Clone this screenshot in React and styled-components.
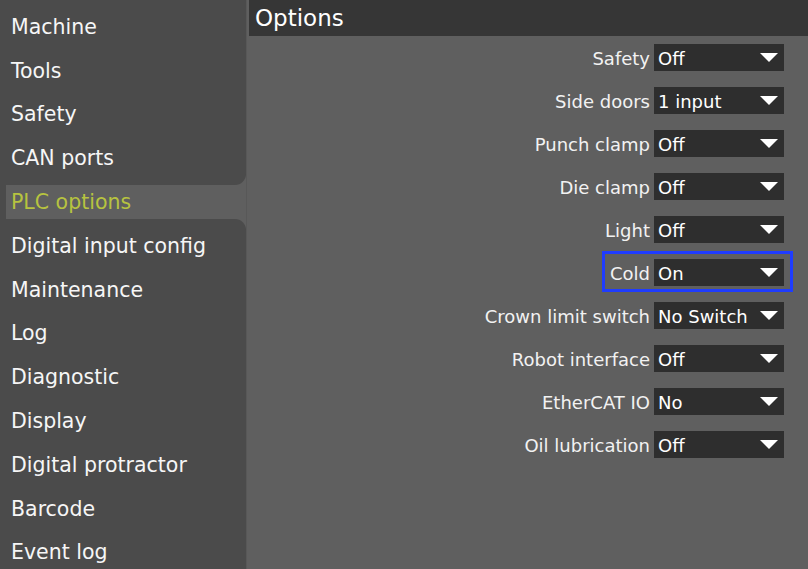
import styled, { createGlobalStyle } from 'styled-components';

const GlobalStyle = createGlobalStyle`
  html, body {
    margin: 0;
    padding: 0;
    background: #5f5f5f;
  }
  body {
    font-family: "DejaVu Sans", "Liberation Sans", sans-serif;
    color: #f4f4f4;
  }
`

const Screen = styled.div`
  display: flex;
  width: 808px;
  height: 569px;
  overflow: hidden;
  background: #5f5f5f;
`

const Sidebar = styled.nav`
  display: flex;
  flex-direction: column;
  width: 246px;
  flex: none;
  background: #5f5f5f;
`

const SidebarTop = styled.div`
  flex: none;
  height: 5px;
  background: #4b4b4b;
`

const NavItem = styled.div`
  display: flex;
  align-items: center;
  flex: none;
  box-sizing: border-box;
  height: ${({ $extend }) => ($extend ? '48.8px' : '43.8px')};
  padding-left: 11px;
  padding-top: ${({ $extend }) => ($extend === 'top' ? '5px' : '0')};
  padding-bottom: ${({ $extend }) => ($extend === 'bottom' ? '5px' : '0')};
  background: #4b4b4b;
  border-bottom-right-radius: ${({ $extend }) => ($extend === 'bottom' ? '11px' : '0')};
  border-top-right-radius: ${({ $extend }) => ($extend === 'top' ? '11px' : '0')};
  font-size: 20.5px;
  color: #f6f6f6;
  white-space: nowrap;
`

const NavItemActive = styled.div`
  display: flex;
  align-items: center;
  flex: none;
  box-sizing: border-box;
  height: 33.8px;
  padding-left: 5px;
  border-left: 6px solid #4b4b4b;
  background: #5f5f5f;
  font-size: 20.5px;
  color: #b7c340;
  white-space: nowrap;
`

const Main = styled.main`
  display: flex;
  flex-direction: column;
  flex: auto;
  padding-left: 2px;
  border-left: 1px solid #585858;
`

const Header = styled.header`
  display: flex;
  align-items: center;
  flex: none;
  height: 36px;
  padding-left: 6px;
  background: #363636;
  font-size: 23px;
  color: #ffffff;
`

const OptionList = styled.div`
  display: flex;
  flex-direction: column;
  align-items: flex-end;
  gap: 16px;
  padding: 8px 24px 0 0;
`

const Row = styled.div`
  display: flex;
  align-items: center;
  gap: 4px;
  border: ${({ $highlight }) => ($highlight ? '3px solid #1f3cff' : 'none')};
  padding: ${({ $highlight }) => ($highlight ? '5px 6px 3px 5px' : '0')};
  margin: ${({ $highlight }) => ($highlight ? '-8px -9px -6px 0' : '0')};
`

const Label = styled.span`
  font-size: 18px;
  color: #f2f2f2;
  padding-top: 2px;
  white-space: nowrap;
`

const Select = styled.div`
  display: flex;
  align-items: center;
  justify-content: space-between;
  box-sizing: border-box;
  width: 130px;
  height: 27px;
  padding: 2px 6px 0 4px;
  background: #2e2e2e;
  font-size: 18px;
  color: #ffffff;
  white-space: nowrap;
`

const Caret = styled.svg`
  width: 18px;
  height: 9px;
  flex: none;
  margin-top: -2px;
`

const navItems = [
  'Machine',
  'Tools',
  'Safety',
  'CAN ports',
  'PLC options',
  'Digital input config',
  'Maintenance',
  'Log',
  'Diagnostic',
  'Display',
  'Digital protractor',
  'Barcode',
  'Event log',
]

const activeIndex = 4

const options = [
  { label: 'Safety', value: 'Off' },
  { label: 'Side doors', value: '1 input' },
  { label: 'Punch clamp', value: 'Off' },
  { label: 'Die clamp', value: 'Off' },
  { label: 'Light', value: 'Off' },
  { label: 'Cold', value: 'On', highlight: true },
  { label: 'Crown limit switch', value: 'No Switch' },
  { label: 'Robot interface', value: 'Off' },
  { label: 'EtherCAT IO', value: 'No' },
  { label: 'Oil lubrication', value: 'Off' },
]

const App = () => {
  return (
    <>
      <GlobalStyle />
      <Screen>
        <Sidebar>
          <SidebarTop />
          {navItems.map((item, i) => {
            if (i === activeIndex) {
              return <NavItemActive key={item}>{item}</NavItemActive>
            }
            const extend = i === activeIndex - 1 ? 'bottom' : i === activeIndex + 1 ? 'top' : undefined
            return (
              <NavItem key={item} $extend={extend}>
                {item}
              </NavItem>
            )
          })}
        </Sidebar>
        <Main>
          <Header>Options</Header>
          <OptionList>
            {options.map((opt) => (
              <Row key={opt.label} $highlight={opt.highlight}>
                <Label>{opt.label}</Label>
                <Select>
                  <span>{opt.value}</span>
                  <Caret viewBox="0 0 18 9">
                    <polygon points="0,0 18,0 9,9" fill="#ffffff" />
                  </Caret>
                </Select>
              </Row>
            ))}
          </OptionList>
        </Main>
      </Screen>
    </>
  );
};

export default App;
